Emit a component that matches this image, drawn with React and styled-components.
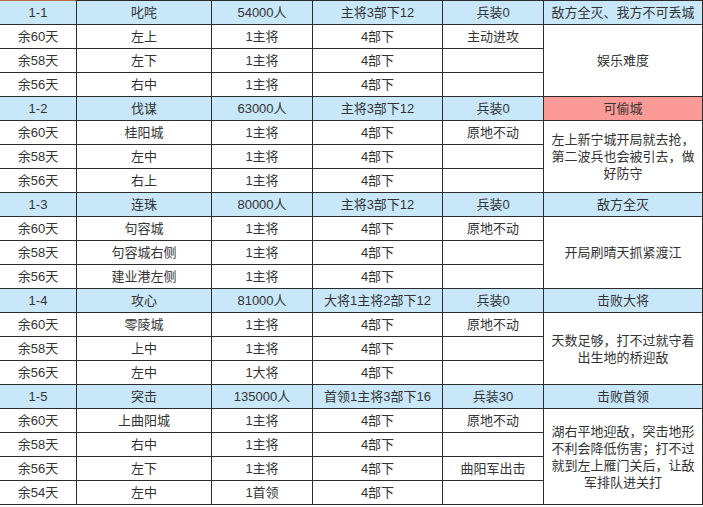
import React from 'react';
import styled, { createGlobalStyle } from 'styled-components';

const groups = [
  {
    id: '1-1', name: '叱咤', troops: '54000人', comp: '主将3部下12', equip: '兵装0',
    goal: '敌方全灭、我方不可丢城', note: '娱乐难度',
    rows: [
      ['余60天', '左上', '1主将', '4部下', '主动进攻'],
      ['余58天', '左下', '1主将', '4部下', ''],
      ['余56天', '右中', '1主将', '4部下', ''],
    ],
  },
  {
    id: '1-2', name: '伐谋', troops: '63000人', comp: '主将3部下12', equip: '兵装0',
    goal: '可偷城', alert: true, note: '左上新宁城开局就去抢，第二波兵也会被引去，做好防守',
    rows: [
      ['余60天', '桂阳城', '1主将', '4部下', '原地不动'],
      ['余58天', '左中', '1主将', '4部下', ''],
      ['余56天', '右上', '1主将', '4部下', ''],
    ],
  },
  {
    id: '1-3', name: '连珠', troops: '80000人', comp: '主将3部下12', equip: '兵装0',
    goal: '敌方全灭', note: '开局刷晴天抓紧渡江',
    rows: [
      ['余60天', '句容城', '1主将', '4部下', '原地不动'],
      ['余58天', '句容城右侧', '1主将', '4部下', ''],
      ['余56天', '建业港左侧', '1主将', '4部下', ''],
    ],
  },
  {
    id: '1-4', name: '攻心', troops: '81000人', comp: '大将1主将2部下12', equip: '兵装0',
    goal: '击败大将', note: '天数足够，打不过就守着出生地的桥迎敌',
    rows: [
      ['余60天', '零陵城', '1主将', '4部下', '原地不动'],
      ['余58天', '上中', '1主将', '4部下', ''],
      ['余56天', '左中', '1大将', '4部下', ''],
    ],
  },
  {
    id: '1-5', name: '突击', troops: '135000人', comp: '首领1主将3部下16', equip: '兵装30',
    goal: '击败首领', note: '湖右平地迎敌，突击地形不利会降低伤害；打不过就到左上雁门关后，让敌军排队进关打',
    rows: [
      ['余60天', '上曲阳城', '1主将', '4部下', '原地不动'],
      ['余58天', '右中', '1主将', '4部下', ''],
      ['余56天', '左下', '1主将', '4部下', '曲阳军出击'],
      ['余54天', '左中', '1首领', '4部下', ''],
    ],
  },
];

const colWidths = [77, 135, 101, 130, 101, 159];

const App = () => (
  <>
    <GlobalStyle />
    <Table>
      <colgroup>
        {colWidths.map((w, i) => (
          <col key={i} style={{ width: w }} />
        ))}
      </colgroup>
      <tbody>
        {groups.map((g, gi) => (
          <React.Fragment key={g.id}>
            <Row>
              <HeadCell $first={gi === 0}>{g.id}</HeadCell>
              <HeadCell>{g.name}</HeadCell>
              <HeadCell>{g.troops}</HeadCell>
              <HeadCell>{g.comp}</HeadCell>
              <HeadCell>{g.equip}</HeadCell>
              <HeadCell $alert={g.alert}>{g.goal}</HeadCell>
            </Row>
            {g.rows.map((r, ri) => (
              <Row key={ri}>
                {r.map((c, ci) => (
                  <Cell key={ci}>{c}</Cell>
                ))}
                {ri === 0 && <NoteCell rowSpan={g.rows.length}>{g.note}</NoteCell>}
              </Row>
            ))}
          </React.Fragment>
        ))}
      </tbody>
    </Table>
  </>
);

const GlobalStyle = createGlobalStyle`
  html, body {
    margin: 0;
    padding: 0;
    background: #ffffff;
    overflow: hidden;
  }
  body {
    font-family: "Liberation Sans", "Noto Sans CJK SC", sans-serif;
  }
`;

const Table = styled.table`
  border-collapse: collapse;
  table-layout: fixed;
  width: 703px;
  margin-left: -1px;
  font-size: 13px;
  color: #333333;
`;

const Row = styled.tr`
  height: 24px;
`;

const Cell = styled.td`
  border: 1px solid #2b2b2b;
  padding: 0 2px;
  height: 23px;
  text-align: center;
  vertical-align: middle;
  white-space: nowrap;
  line-height: 17px;
  background: #ffffff;
`;

const HeadCell = styled(Cell)`
  background: ${p => (p.$alert ? '#fb9a97' : '#c8e7f9')};
  border-top-color: ${p => (p.$first ? '#b86c47' : '#2b2b2b')};
`;

const NoteCell = styled(Cell)`
  white-space: normal;
  padding: 0 6px;
  line-height: 17px;
`;

export default App;
